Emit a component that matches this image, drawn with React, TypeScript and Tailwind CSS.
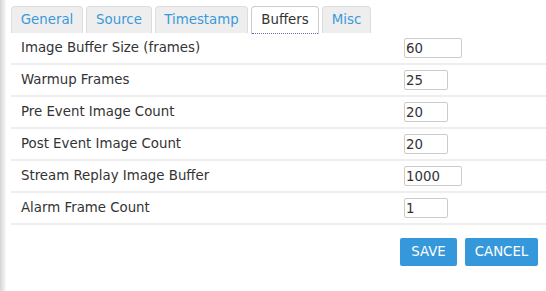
import React from "react";

const rows: { label: string; value: string; wide: boolean }[] = [
  { label: "Image Buffer Size (frames)", value: "60", wide: true },
  { label: "Warmup Frames", value: "25", wide: false },
  { label: "Pre Event Image Count", value: "20", wide: false },
  { label: "Post Event Image Count", value: "20", wide: false },
  { label: "Stream Replay Image Buffer", value: "1000", wide: true },
  { label: "Alarm Frame Count", value: "1", wide: false },
];

const tabs: { name: string; w: string }[] = [
  { name: "General", w: "w-[72px]" },
  { name: "Source", w: "w-[66px]" },
  { name: "Timestamp", w: "w-[93px]" },
  { name: "Buffers", w: "w-[68px]" },
  { name: "Misc", w: "w-[49px]" },
];

export default function App() {
  return (
    <div
      className="w-[546px] h-[291px] bg-white flex overflow-hidden text-[13.33px] text-[#333]"
      style={{ fontFamily: '"DejaVu Sans", Verdana, sans-serif' }}
    >
      <div className="w-[6px] h-full bg-gradient-to-r from-[#d4d4d4] to-[#fafafa]" />
      <div className="flex-1 flex flex-col pl-[5px]">
        <div className="flex gap-[3px] pt-[6px] h-[34px]">
          {tabs.map((t) => {
            const active = t.name === "Buffers";
            return (
              <div
                key={t.name}
                className={
                  active
                    ? t.w + " h-[28px] flex items-center justify-center border border-[#ccc] border-b-0 rounded-t-[4px] bg-white text-[#333] relative"
                    : t.w + " h-[27px] flex items-center justify-center border border-[#ddd] border-b-0 rounded-t-[4px] bg-[#eee] text-[#3a9ad9]"
                }
              >
                <span className={active ? "-mt-[1px]" : ""}>{t.name}</span>
                {active && (
                  <div className="absolute left-0 right-0 bottom-[0px] border-b border-dotted border-[#6b6bb0]" />
                )}
              </div>
            );
          })}
        </div>
        <div className="flex flex-col -mt-[1px]">
          {rows.map((r) => (
            <div
              key={r.label}
              className="h-[32px] flex items-center border-b-2 border-[#eee]"
            >
              <div className="w-[393px] pl-[10px]">{r.label}</div>
              <input
                readOnly
                value={r.value}
                className={
                  (r.wide ? "w-[58px]" : "w-[44px]") +
                  " h-[20px] border border-[#ccc] rounded-[2px] px-[1px] text-[13.33px] text-[#333] outline-none"
                }
                style={{ fontFamily: '"DejaVu Sans", Verdana, sans-serif' }}
              />
            </div>
          ))}
        </div>
        <div className="flex justify-end gap-[8px] pr-[8px] mt-[13px]">
          <button className="h-[28px] w-[57px] bg-[#3498db] text-white rounded-[2px] text-[13.33px]">
            SAVE
          </button>
          <button className="h-[28px] w-[73px] bg-[#3498db] text-white rounded-[2px] text-[13.33px]">
            CANCEL
          </button>
        </div>
      </div>
    </div>
  );
}
